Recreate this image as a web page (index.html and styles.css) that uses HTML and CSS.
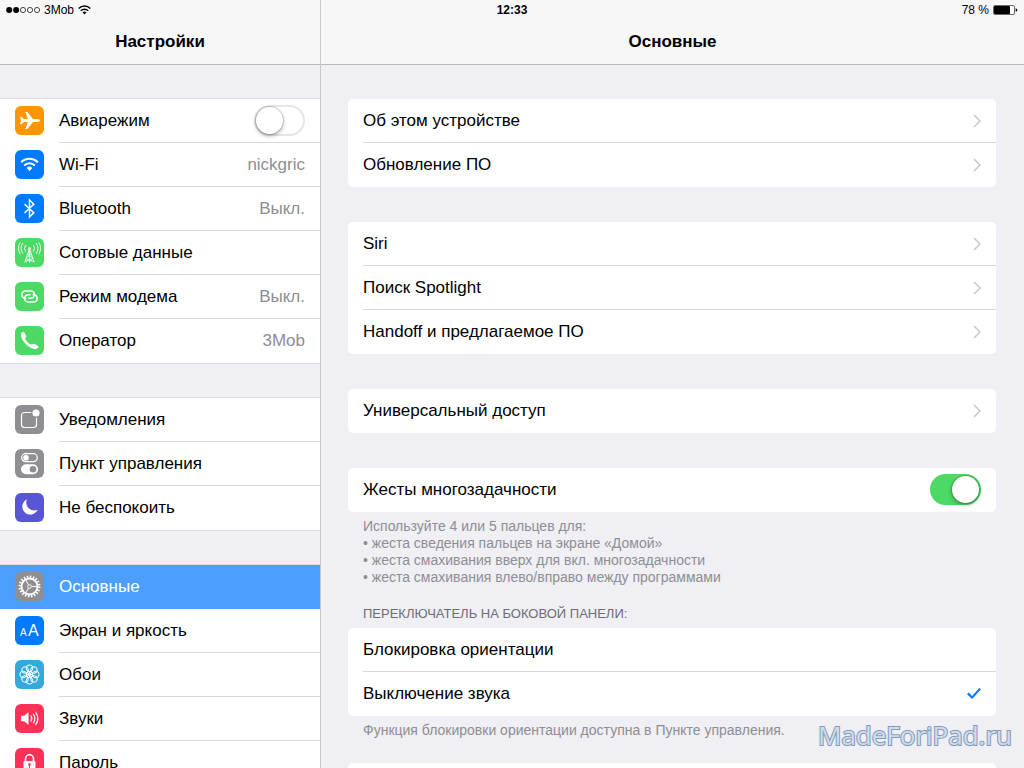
FILE: index.html
```html
<!DOCTYPE html>
<html lang="ru">
<head>
    <meta charset="UTF-8">
    <meta name="viewport" content="width=device-width, initial-scale=1.0">
    <title>Настройки</title>
    <link rel="stylesheet" href="styles.css">
</head>
<body>

    <div class="app">
        <div class="status">
            <div class="status-left">
                <svg width="34" height="8" viewBox="0 0 34 8"><circle cx="3.2" cy="4" r="3"/><circle cx="10.1" cy="4" r="3"/><g fill="none" stroke="#000" stroke-width=".7"><circle cx="17" cy="4" r="2.6"/><circle cx="24" cy="4" r="2.6"/><circle cx="31" cy="4" r="2.6"/></g></svg>
                <span>3Mob</span>
                <svg width="13" height="10" viewBox="0 0 13 10"><g fill="none" stroke="#000" stroke-width="1.5"><path d="M.7 3.5a8.2 8.2 0 0 1 11.6 0"/><path d="M2.8 5.8a5.2 5.2 0 0 1 7.4 0"/></g><path d="M4.5 7.5a2.9 2.9 0 0 1 4 0l-2 2z"/></svg>
            </div>
            <time class="status-time">12:33</time>
            <div class="status-right">
                <span>78 %</span>
                <svg width="25" height="10" viewBox="0 0 25 10"><rect x=".5" y=".5" width="21" height="9" rx="1.5" fill="#fff" stroke="#444" stroke-width=".8"/><rect x="1" y="1" width="16" height="8" rx="1"/><path d="M22.7 3.2q1.6.4 1.6 1.8t-1.6 1.8z"/></svg>
            </div>
        </div>

        <aside class="sidebar">
            <h1 class="title">Настройки</h1>
            <nav class="scroll">
                <ul class="group">
                    <li class="item">
                        <svg class="icon orange" viewBox="0 0 29 29"><path fill="#fff" d="M5 10.8h1.5l2.4 2.3h4L10.3 6h2.1l5.6 7.1h4.2c2.100 0 2.800.8 2.800 1.400s-.7 1.400-2.800 1.400H18L12.400 23h-2.100l2.600-7.100h-4l-2.400 2.300H5l1.100-3.700z"/></svg>
                        <div class="cell">
                            <label for="airplane">Авиарежим</label>
                            <input class="switch" type="checkbox" id="airplane">
                        </div>
                    </li>
                    <li><a class="item" href="#wifi">
                        <svg class="icon blue" viewBox="0 0 29 29"><g fill="none" stroke="#fff" stroke-width="2.1"><path d="M6.2 12.2a11.8 11.8 0 0 1 16.6 0"/><path d="M9.2 15.5a7.5 7.5 0 0 1 10.6 0"/></g><path fill="#fff" d="M11.6 18a4.2 4.2 0 0 1 5.8 0l-2.9 3z"/></svg>
                        <div class="cell"><span>Wi-Fi</span><span class="value">nickgric</span></div>
                    </a></li>
                    <li><a class="item" href="#bluetooth">
                        <svg class="icon blue" viewBox="0 0 29 29"><path fill="none" stroke="#fff" stroke-width="1.5" d="M9.5 10l9.3 8.7-4.3 4.3V6l4.3 4.3L9.500 19"/></svg>
                        <div class="cell"><span>Bluetooth</span><span class="value">Выкл.</span></div>
                    </a></li>
                    <li><a class="item" href="#cellular">
                        <svg class="icon green" viewBox="0 0 29 29"><g fill="none" stroke="#fff" stroke-width=".9" stroke-linecap="round"><path d="M14.5 10.5L10 24M14.5 10.5L19 24M14.5 11v13M12.8 16l4.5 3.5M16.2 16l-4.5 3.5M11.3 20.5l6.8 3M17.7 20.5l-6.800 3"/><path d="M10.500 7.300a5 5 0 0 0 0 6M7.700 5.300a8.500 8.500 0 0 0 0 10M18.500 7.300a5 5 0 0 1 0 6M21.300 5.300a8.500 8.500 0 0 1 0 10M5 4.500a11.500 11.500 0 0 0 0 11.500M24 4.500a11.500 11.500 0 0 1 0 11.500"/></g><circle cx="14.5" cy="10.5" r="1.300" fill="#fff"/></svg>
                        <div class="cell"><span>Сотовые данные</span></div>
                    </a></li>
                    <li><a class="item" href="#hotspot">
                        <svg class="icon green" viewBox="0 0 29 29"><g fill="none" stroke="#fff" stroke-width="1.5" stroke-linecap="round"><path d="M10.800 16.300h-.3a3.700 3.700 0 0 1 0-7.400h5.200a3.700 3.700 0 0 1 0 7.400h-1.800"/><path d="M18.200 12.700h.3a3.700 3.700 0 0 1 0 7.400h-5.200a3.700 3.700 0 0 1 0-7.400h1.800"/></g></svg>
                        <div class="cell"><span>Режим модема</span><span class="value">Выкл.</span></div>
                    </a></li>
                    <li><a class="item" href="#carrier">
                        <svg class="icon green" viewBox="0 0 29 29"><path fill="#fff" d="M6.1 7.5c.4-1 1.5-1.9 2.3-1.8.8.2 2.4 3.1 2.8 4.3.3 1-1 1.7-1.1 2.6-.1 1.3 4.4 5.9 6 6 1 0 1.8-1.1 2.8-.8 1.2.3 4.400 2 4.600 2.900.2 1.100-1.500 2.200-3 2.300-6.400.3-15.700-9.400-14.400-15.500z"/></svg>
                        <div class="cell"><span>Оператор</span><span class="value">3Mob</span></div>
                    </a></li>
                </ul>

                <ul class="group">
                    <li><a class="item" href="#notifications">
                        <svg class="icon gray" viewBox="0 0 29 29"><path fill="none" stroke="#fff" stroke-width="1.2" d="M16.300 7.500H9.500a3 3 0 0 0-3 3v9a3 3 0 0 0 3 3h9a3 3 0 0 0 3-3v-6.800"/><circle cx="21" cy="8" r="3.600" fill="#fff"/></svg>
                        <div class="cell"><span>Уведомления</span></div>
                    </a></li>
                    <li><a class="item" href="#control">
                        <svg class="icon gray" viewBox="0 0 29 29"><rect x="6.700" y="4.700" width="15.600" height="8" rx="4" fill="none" stroke="#fff" stroke-width="1.200"/><circle cx="11" cy="8.700" r="2.800" fill="#fff"/><rect x="6" y="15.300" width="17" height="10" rx="5" fill="#fff"/><circle cx="18" cy="20.300" r="3.300" fill="#8e8e93"/></svg>
                        <div class="cell"><span>Пункт управления</span></div>
                    </a></li>
                    <li><a class="item" href="#dnd">
                        <svg class="icon purple" viewBox="0 0 29 29"><path fill="#fff" d="M12 6.300a8 8 0 1 0 10.600 10.500A8 8 0 0 1 12 6.300z"/></svg>
                        <div class="cell"><span>Не беспокоить</span></div>
                    </a></li>
                </ul>

                <ul class="group">
                    <li><a class="item selected" href="#general">
                        <svg class="icon gray" viewBox="0 0 29 29"><g fill="none" stroke="#fff"><circle cx="14.5" cy="14.5" r="9.800" stroke-width="2.400" stroke-dasharray="1.500 1.579"/><circle cx="14.5" cy="14.5" r="8" stroke-width="1.800"/><circle cx="14.5" cy="14.5" r="1.800" stroke-width="1"/><path d="M16.500 14.500H22M13.500 12.800l-2.800-4.900M13.500 16.200l-2.800 4.900"/></g></svg>
                        <div class="cell"><span>Основные</span></div>
                    </a></li>
                    <li><a class="item" href="#display">
                        <svg class="icon blue" viewBox="0 0 29 29"><text class="glyph" x="5" y="20" font-size="10">A</text><text class="glyph" x="13" y="20" font-size="16">A</text></svg>
                        <div class="cell"><span>Экран и яркость</span></div>
                    </a></li>
                    <li><a class="item" href="#wallpaper">
                        <svg class="icon cyan" viewBox="0 0 29 29"><g fill="none" stroke="#fff" stroke-width="1"><circle cx="14.5" cy="8.200" r="3.300"/><circle cx="18.950" cy="10.050" r="3.300"/><circle cx="20.800" cy="14.500" r="3.300"/><circle cx="18.950" cy="18.950" r="3.300"/><circle cx="14.500" cy="20.800" r="3.300"/><circle cx="10.050" cy="18.950" r="3.300"/><circle cx="8.200" cy="14.500" r="3.300"/><circle cx="10.050" cy="10.050" r="3.300"/><circle cx="14.500" cy="14.500" r="3"/><path d="M14.500 11v7M11 14.500h7M12 12l5 5M17 12l-5 5"/></g></svg>
                        <div class="cell"><span>Обои</span></div>
                    </a></li>
                    <li><a class="item" href="#sounds">
                        <svg class="icon red" viewBox="0 0 29 29"><path fill="#fff" d="M6 11.700h3l4.500-3.400v12.400L9 17.300H6z"/><g fill="none" stroke="#fff" stroke-width="1.200" stroke-linecap="round"><path d="M16 12a4.500 4.500 0 0 1 0 5M18.400 10.200a7.500 7.500 0 0 1 0 8.600M20.800 8.500a10.500 10.500 0 0 1 0 12"/></g></svg>
                        <div class="cell"><span>Звуки</span></div>
                    </a></li>
                    <li><a class="item" href="#passcode">
                        <svg class="icon red" viewBox="0 0 29 29"><path fill="none" stroke="#fff" stroke-width="1.600" d="M10.500 14v-3.200a4 4 0 0 1 8 0V14"/><rect x="8.500" y="13" width="12" height="10" rx="1" fill="#fff"/><circle cx="14.500" cy="16.500" r="1.300" fill="#fc3158"/><path stroke="#fc3158" d="M14.500 16.500v4"/></svg>
                        <div class="cell"><span>Пароль</span></div>
                    </a></li>
                </ul>
            </nav>
        </aside>

        <main class="content">
            <h2 class="title">Основные</h2>
            <div class="scroll">
                <div class="card">
                    <a class="row" href="#about">Об этом устройстве <svg class="chevron" viewBox="0 0 8 14"><path d="M1 1l6 6-6 6"/></svg></a>
                    <a class="row" href="#update">Обновление ПО <svg class="chevron" viewBox="0 0 8 14"><path d="M1 1l6 6-6 6"/></svg></a>
                </div>

                <div class="card">
                    <a class="row" href="#siri">Siri <svg class="chevron" viewBox="0 0 8 14"><path d="M1 1l6 6-6 6"/></svg></a>
                    <a class="row" href="#spotlight">Поиск Spotlight <svg class="chevron" viewBox="0 0 8 14"><path d="M1 1l6 6-6 6"/></svg></a>
                    <a class="row" href="#handoff">Handoff и предлагаемое ПО <svg class="chevron" viewBox="0 0 8 14"><path d="M1 1l6 6-6 6"/></svg></a>
                </div>

                <div class="card">
                    <a class="row" href="#accessibility">Универсальный доступ <svg class="chevron" viewBox="0 0 8 14"><path d="M1 1l6 6-6 6"/></svg></a>
                </div>

                <div class="card">
                    <div class="row">
                        <label for="gestures">Жесты многозадачности</label>
                        <input class="switch" type="checkbox" id="gestures" checked>
                    </div>
                </div>
                <p class="note">Используйте 4 или 5 пальцев для:<br>
                    • жеста сведения пальцев на экране «Домой»<br>
                    • жеста смахивания вверх для вкл. многозадачности<br>
                    • жеста смахивания влево/вправо между программами</p>

                <h3 class="caption">Переключатель на боковой панели:</h3>
                <div class="card">
                    <label class="row">Блокировка ориентации <input class="check" type="radio" name="side"></label>
                    <label class="row">Выключение звука <input class="check" type="radio" name="side" checked></label>
                </div>
                <p class="note">Функция блокировки ориентации доступна в Пункте управления.</p>

                <div class="card">
                    <div class="row"></div>
                </div>
            </div>
        </main>

        <div class="watermark">MadeForiPad.ru</div>
    </div>

</body>
</html>
```

FILE: styles.css
```css
* {
    box-sizing: border-box;
}
body {
    margin: 0;
    font-family: "Liberation Sans", Arial, sans-serif;
    font-size: 17px;
    color: #000;
    background-color: #efeff4;
}
ul {
    list-style: none;
    margin: 0;
    padding: 0;
}
a {
    color: inherit;
    text-decoration: none;
}

/* Two panes, the status bar lies across both */
.app {
    display: grid;
    grid-template-columns: 321px 1fr;
    grid-template-rows: 20px 1fr;
    height: 100vh;
    overflow: hidden;
    position: relative;
}
.status {
    grid-area: 1 / 1 / 2 / 3;
    z-index: 1;
    display: grid;
    grid-template-columns: 1fr auto 1fr;
    align-items: center;
    padding: 0 6px;
    font-size: 12px;
}
.status-left, .status-right {
    display: flex;
    align-items: center;
    gap: 4px;
}
.status-right {
    justify-content: flex-end;
}
.status-time {
    font-weight: bold;
}
.sidebar, .content {
    display: flex;
    flex-direction: column;
    min-width: 0;
    min-height: 0;
}
.sidebar {
    grid-area: 1 / 1 / 3 / 2;
    border-right: 1px solid #c8c7cc;
}
.content {
    grid-area: 1 / 2 / 3 / 3;
}
.title {
    flex: none;
    margin: 0;
    padding: 20px 0 0;
    line-height: 44px;
    font-size: 17px;
    text-align: center;
    background-color: #f7f7f7;
    border-bottom: 1px solid #b8b8bd;
}
.scroll {
    flex: 1;
    min-height: 0;
    overflow-y: auto;
    scrollbar-width: none;
    padding-top: 34px;
}

/* Sidebar list */
.group {
    margin-bottom: 35px;
    background-color: #fff;
    box-shadow: 0 0 0 1px #dcdce0;
}
.item {
    display: flex;
    align-items: flex-start;
    gap: 15px;
    height: 44px;
    padding-left: 15px;
}
.icon {
    flex: none;
    width: 29px;
    height: 29px;
    margin-top: 7px;
    border-radius: 6px;
}
.orange { background-color: #ff9500; }
.blue { background-color: #007aff; }
.green { background-color: #4cd964; }
.gray { background-color: #8e8e93; }
.purple { background-color: #5856d6; }
.cyan { background-color: #34aadc; }
.red { background-color: #fc3158; }
.glyph {
    fill: #fff;
}
.cell {
    flex: 1;
    display: flex;
    align-items: center;
    justify-content: space-between;
    height: 44px;
    padding-right: 15px;
    border-bottom: 1px solid #d9d9dd;
}
.group li:last-child .cell {
    border-bottom-color: transparent;
}
.value {
    color: #8e8e93;
}
.selected {
    background-color: #4c9ffe;
    color: #fff;
}
.selected .cell {
    border-bottom-color: transparent;
}

/* Right pane */
.content .scroll {
    padding-left: 27px;
    padding-right: 28px;
}
.card {
    margin-bottom: 35px;
    padding-left: 15px;
    background-color: #fff;
    border-radius: 5px;
}
.row {
    display: flex;
    align-items: center;
    justify-content: space-between;
    height: 44px;
    padding-right: 15px;
    border-bottom: 1px solid #d9d9dd;
}
.row:last-child {
    border-bottom-color: transparent;
}
.chevron {
    width: 8px;
    height: 14px;
    fill: none;
    stroke: #c7c7cc;
    stroke-width: 1.5;
}
.note, .caption {
    margin: 0 15px;
    line-height: 17px;
    font-weight: normal;
}
.note {
    margin-top: -29px;
    font-size: 14px;
    color: #8e8e93;
}
.caption {
    margin-top: 19px;
    margin-bottom: 6px;
    font-size: 13px;
    color: #6d6d72;
    text-transform: uppercase;
}
.note + .card {
    margin-top: 24px;
}

/* Controls */
.switch {
    appearance: none;
    flex: none;
    display: flex;
    width: 51px;
    height: 31px;
    margin: 0;
    border: 2px solid #e5e5ea;
    border-radius: 16px;
    background-color: #fff;
}
.switch::before {
    content: "";
    width: 27px;
    height: 27px;
    border-radius: 50%;
    background-color: #fff;
    box-shadow: 0 0 0 1px rgba(0, 0, 0, 0.15), 0 2px 4px rgba(0, 0, 0, 0.3);
}
.switch:checked {
    justify-content: flex-end;
    border-color: #4cd964;
    background-color: #4cd964;
}
.check {
    appearance: none;
    width: 14px;
    height: 14px;
    margin: 0;
}
.check:checked {
    background-color: #007aff;
    clip-path: polygon(0 55%, 12% 43%, 36% 67%, 88% 10%, 100% 20%, 37% 90%);
}

.watermark {
    position: absolute;
    right: 12px;
    bottom: 16px;
    font-family: "Open Sans", sans-serif;
    font-size: 26px;
    line-height: 34px;
    color: #d3dcea;
    -webkit-text-stroke: 2px #7f9abb;
    paint-order: stroke fill;
}
```
